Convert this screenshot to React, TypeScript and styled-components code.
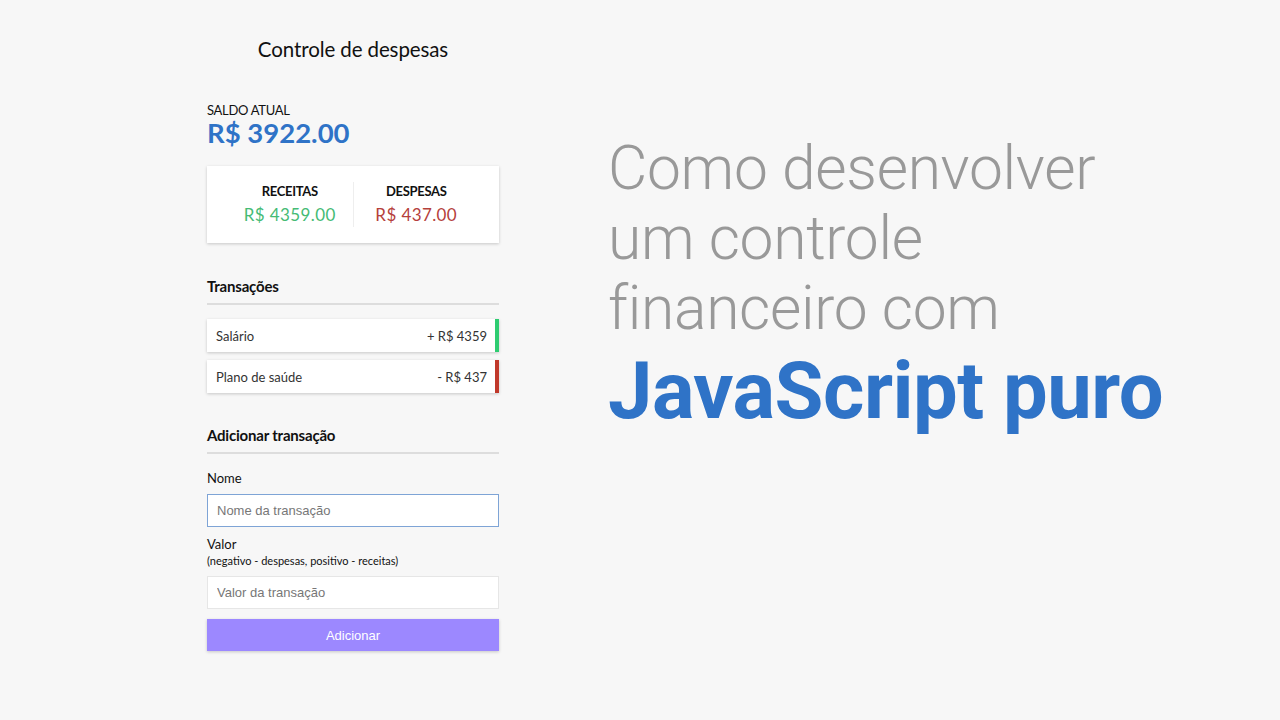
import styled, { createGlobalStyle } from "styled-components"

const GlobalStyle = createGlobalStyle`
	* {
		box-sizing: border-box;
	}

	body {
		margin: 0;
		background-color: #f7f7f7;
		font-family: "Lato", "Noto Sans", sans-serif;
		color: #111;
	}
`

const Page = styled.main`
	width: 1280px;
	height: 720px;
	display: flex;
	align-items: flex-start;
	padding-left: 207px;
	gap: 109px;
	overflow: hidden;
`

const Panel = styled.section`
	width: 292px;
	display: flex;
	flex-direction: column;
	padding-top: 37px;
`

const Title = styled.h2`
	margin: 0 0 41px;
	font-size: 20.5px;
	line-height: 24px;
	font-weight: 400;
	text-align: center;
	letter-spacing: -0.1px;
`

const BalanceLabel = styled.h4`
	margin: 0;
	font-size: 13px;
	line-height: 16px;
	font-weight: 400;
	letter-spacing: -0.3px;
	text-transform: uppercase;
`

const Balance = styled.h1`
	margin: 0 0 18px;
	font-size: 27.5px;
	font-weight: 700;
	line-height: 30px;
	color: #2f73c7;
`

const SummaryCard = styled.div`
	background-color: #fff;
	box-shadow: 0 1px 3px rgba(0, 0, 0, 0.2);
	display: flex;
	justify-content: space-between;
	padding: 16px 20px;
	margin-bottom: 34px;
`

const SummaryItem = styled.div`
	flex: 1;
	text-align: center;

	&:first-of-type {
		border-right: 1px solid #eee;
	}

	h4 {
		margin: 0;
		font-size: 13px;
		font-weight: 700;
		letter-spacing: -0.3px;
		text-transform: uppercase;
		line-height: 18px;
	}
`

const Money = styled.p<{ $tone: "plus" | "minus" }>`
	margin: 3px 0 0;
	font-size: 17px;
	line-height: 24px;
	letter-spacing: 0.4px;
	color: ${({ $tone }) => ($tone === "plus" ? "#45bb75" : "#b5403b")};
`

const SectionTitle = styled.h3`
	margin: 0 0 14px;
	padding-bottom: 8px;
	border-bottom: 2px solid #ddd;
	font-size: 15px;
	font-weight: 700;
	letter-spacing: -0.2px;
`

const TransactionList = styled.ul`
	list-style: none;
	margin: 0 0 33px;
	padding: 0;
	display: flex;
	flex-direction: column;
	gap: 8px;
`

const TransactionItem = styled.li<{ $tone: "plus" | "minus" }>`
	background-color: #fff;
	box-shadow: 0 1px 3px rgba(0, 0, 0, 0.2);
	display: flex;
	justify-content: space-between;
	align-items: center;
	height: 33px;
	padding: 0 8px 0 9px;
	font-size: 13px;
	color: #333;
	border-right: 4px solid ${({ $tone }) => ($tone === "plus" ? "#2ecc71" : "#c0392b")};
`

const Form = styled.form`
	display: flex;
	flex-direction: column;
`

const Field = styled.div`
	display: flex;
	flex-direction: column;
	margin-bottom: 7px;

	& + & {
		margin-bottom: 10px;
	}
`

const Label = styled.label`
	font-size: 13px;
	line-height: 16px;
	margin: 2px 0 8px;

	small {
		display: block;
		font-size: 11px;
		line-height: 16px;
		margin: 1px 0 -1px;
	}
`

const Input = styled.input<{ $focused?: boolean }>`
	height: 33px;
	border: 1px solid ${({ $focused }) => ($focused ? "#7ea4d6" : "#e6e6e6")};
	background-color: #fff;
	padding: 0 9px;
	font-family: "Liberation Sans", Arial, sans-serif;
	font-size: 13px;
	color: #333;
	outline: none;

	&::placeholder {
		color: #777;
	}
`

const Button = styled.button`
	height: 32px;
	border: none;
	background-color: #9c88ff;
	box-shadow: 0 1px 3px rgba(0, 0, 0, 0.2);
	color: #fff;
	font-family: "Liberation Sans", Arial, sans-serif;
	font-size: 13px;
	cursor: pointer;
`

const Headline = styled.div`
	padding-top: 134px;
	font-family: "Roboto", sans-serif;
`

const HeadlineLight = styled.p`
	margin: 0;
	font-size: 60.5px;
	font-weight: 300;
	line-height: 70px;
	color: #999;
	letter-spacing: -0.3px;
`

const HeadlineStrong = styled.p`
	margin: 2px 0 0;
	font-size: 79.5px;
	font-weight: 700;
	line-height: 90px;
	color: #2f73c7;
	letter-spacing: -0.5px;
`

const App = () => {
	return (
		<>
			<GlobalStyle />
			<Page>
				<Panel>
					<Title>Controle de despesas</Title>
					<BalanceLabel>Saldo atual</BalanceLabel>
					<Balance>R$ 3922.00</Balance>
					<SummaryCard>
						<SummaryItem>
							<h4>Receitas</h4>
							<Money $tone="plus">R$ 4359.00</Money>
						</SummaryItem>
						<SummaryItem>
							<h4>Despesas</h4>
							<Money $tone="minus">R$ 437.00</Money>
						</SummaryItem>
					</SummaryCard>
					<SectionTitle>Transações</SectionTitle>
					<TransactionList>
						<TransactionItem $tone="plus">
							Salário <span>+ R$ 4359</span>
						</TransactionItem>
						<TransactionItem $tone="minus">
							Plano de saúde <span>- R$ 437</span>
						</TransactionItem>
					</TransactionList>
					<SectionTitle>Adicionar transação</SectionTitle>
					<Form onSubmit={(e) => e.preventDefault()}>
						<Field>
							<Label htmlFor="text">Nome</Label>
							<Input id="text" $focused placeholder="Nome da transação" />
						</Field>
						<Field>
							<Label htmlFor="amount">
								Valor
								<small>(negativo - despesas, positivo - receitas)</small>
							</Label>
							<Input id="amount" placeholder="Valor da transação" />
						</Field>
						<Button type="submit">Adicionar</Button>
					</Form>
				</Panel>
				<Headline>
					<HeadlineLight>
						Como desenvolver
						<br />
						um controle
						<br />
						financeiro com
					</HeadlineLight>
					<HeadlineStrong>JavaScript puro</HeadlineStrong>
				</Headline>
			</Page>
		</>
	)
}

export default App
